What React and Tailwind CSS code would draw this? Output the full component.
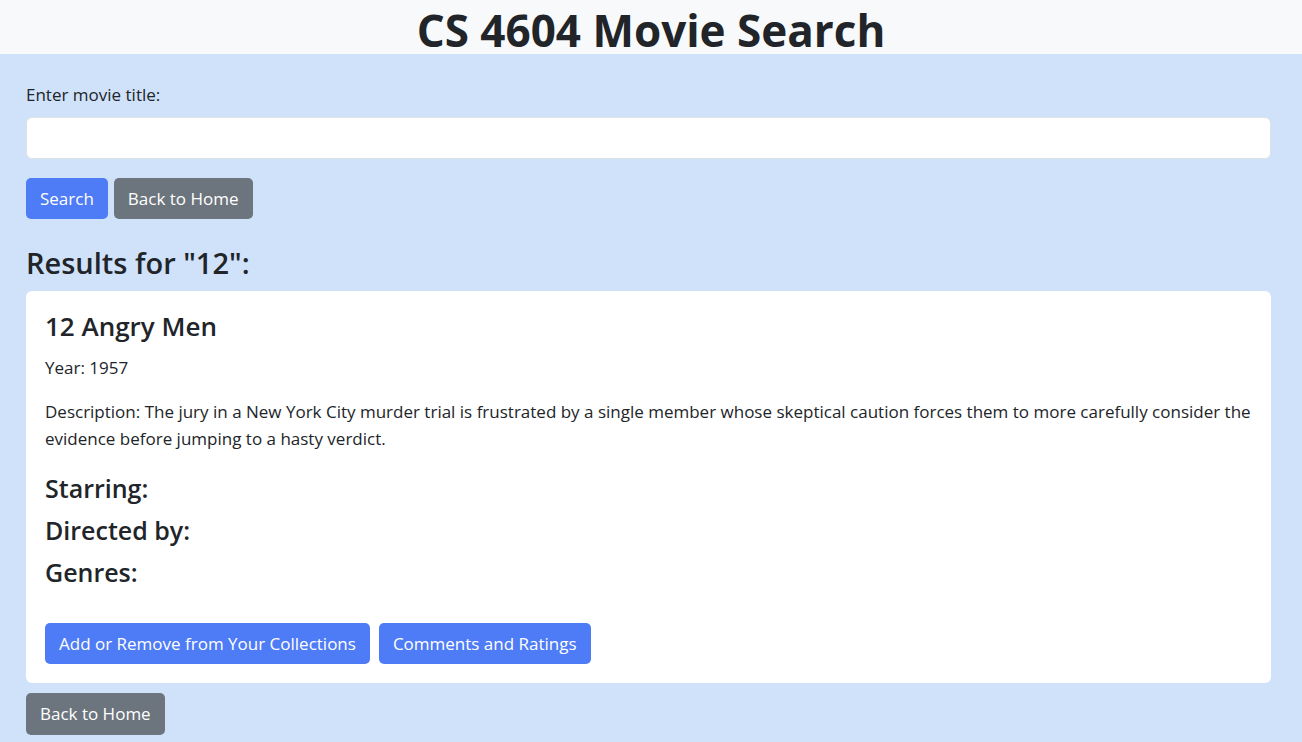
export default function App() {
    return (
        <div className="min-h-[742px] bg-[#cfe2fa] text-[#212529] font-['Open_Sans',sans-serif]">
            {/* Header */}
            <div className="h-[54px] bg-[#f8f9fa] flex items-center justify-center pt-[5px]">
                <h1 className="text-[44px] font-bold leading-none">CS 4604 Movie Search</h1>
            </div>

            <div className="pl-[26px] pr-[31px] pt-[29px]">
                {/* Search form */}
                <label className="block text-[17px] leading-6 mb-[10px]">Enter movie title:</label>
                <input
                    type="text"
                    className="block w-full h-[42px] bg-white border border-[#dee2e6] rounded-[6px] px-3"
                />
                <div className="flex gap-[6px] mt-[19px]">
                    <button className="h-[41px] px-[14px] rounded-[5px] bg-[#4e7bf6] text-white text-[17px]">Search</button>
                    <button className="h-[41px] px-[14px] rounded-[5px] bg-[#6c757d] text-white text-[17px]">Back to Home</button>
                </div>

                <h2 className="text-[29px] font-semibold leading-[36px] mt-[26px] mb-[10px]">Results for "12":</h2>

                {/* Result card */}
                <div className="bg-white rounded-[6px] px-[19px] pt-[20px] pb-[19px]">
                    <h3 className="text-[26px] font-semibold leading-[31px]">12 Angry Men</h3>
                    <p className="text-[17px] leading-6 mt-[14px]">Year: 1957</p>
                    <p className="text-[17px] leading-[27px] mt-[18px]">
                        Description: The jury in a New York City murder trial is frustrated by a single member whose skeptical caution forces them to more carefully consider the evidence before jumping to a hasty verdict.
                    </p>
                    <div className="mt-[21px] flex flex-col gap-[12px]">
                        <h4 className="text-[25px] font-semibold leading-[30px]">Starring:</h4>
                        <h4 className="text-[25px] font-semibold leading-[30px]">Directed by:</h4>
                        <h4 className="text-[25px] font-semibold leading-[30px]">Genres:</h4>
                    </div>
                    <div className="flex gap-[9px] mt-[36px]">
                        <button className="h-[41px] px-[14px] rounded-[5px] bg-[#4e7bf6] text-white text-[17px]">Add or Remove from Your Collections</button>
                        <button className="h-[41px] px-[14px] rounded-[5px] bg-[#4e7bf6] text-white text-[17px]">Comments and Ratings</button>
                    </div>
                </div>

                <button className="mt-[10px] h-[42px] px-[14px] rounded-[5px] bg-[#6c757d] text-white text-[17px]">Back to Home</button>
            </div>
        </div>
    );
}
